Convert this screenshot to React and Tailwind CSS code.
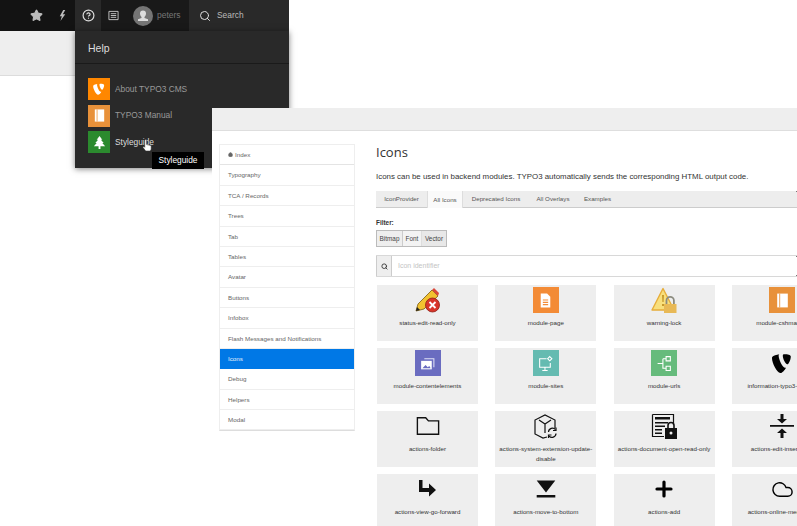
import React from "react";
import { Star, CircleHelp, Search, Plus, Cloud, House } from "lucide-react";

const typo3Path =
  "M11 12.5c-.3.1-.5.1-.8.1-1.9 0-4.7-6.6-4.7-8.8 0-.8.2-1.1.5-1.3C3.7 2.8 1.5 3.5.8 4.4c-.2.2-.3.6-.3 1.1 0 3.4 3.7 11 6.3 11 1.2 0 3.2-2 4.2-4zM9.8 2.4c2.4 0 4.8.4 4.8 1.7 0 2.7-1.7 5.9-2.6 5.9-1.5 0-3.4-4.3-3.4-6.4 0-1 .4-1.2 1.2-1.2z";

const menuItems = [
  "Typography",
  "TCA / Records",
  "Trees",
  "Tab",
  "Tables",
  "Avatar",
  "Buttons",
  "Infobox",
  "Flash Messages and Notifications",
  "Icons",
  "Debug",
  "Helpers",
  "Modal",
];

function Typo3Logo({ className, fill = "#fff" }) {
  return (
    <svg viewBox="0 0 16 18" className={className}>
      <path d={typo3Path} fill={fill} />
    </svg>
  );
}

function BookGlyph({ className }) {
  return (
    <svg viewBox="0 0 16 16" className={className}>
      <path d="M3 1.5h10v13H3z" fill="#fff" />
      <path d="M5 1.5h.8v13H5z" fill="#e8913a" />
    </svg>
  );
}

function EdgeDot({ className }) {
  return <span className={`absolute right-0 w-[1px] h-[1px] bg-[#777] ${className}`} />;
}

function ModuleBox({ color, children }) {
  return (
    <div className="w-[26px] h-[26px] flex items-center justify-center" style={{ backgroundColor: color }}>
      {children}
    </div>
  );
}

function PageModule() {
  return (
    <ModuleBox color="#f38b36">
      <svg viewBox="0 0 16 16" className="w-[17px] h-[17px]">
        <path d="M3.5 1.5h6l3 3v10h-9z" fill="#fff" />
        <path d="M5.5 7h5v1.1h-5zM5.5 9.2h5v1.1h-5zM5.5 11.4h5v1.1h-5z" fill="#f38b36" />
      </svg>
    </ModuleBox>
  );
}

function ContentModule() {
  return (
    <ModuleBox color="#6a6cc0">
      <svg viewBox="0 0 16 16" className="w-[17px] h-[17px]">
        <path d="M5 3.5h9v8" fill="none" stroke="#dfe0f5" strokeWidth="1" />
        <path d="M2 5.5h10v8H2z" fill="#fff" />
        <path d="M3.2 12.5l3-3 2 2 1.5-1.2 1.3 2.2z" fill="#6a6cc0" />
      </svg>
    </ModuleBox>
  );
}

function SitesModule() {
  return (
    <ModuleBox color="#65bbb1">
      <svg viewBox="0 0 16 16" className="w-[17px] h-[17px]" fill="none" stroke="#fff">
        <path d="M9 3.5H2.5v8h10V7.5M7.5 11.5v2.5M5 14.5h5" />
        <path d="M12 1.500l2 2-2 2-2-2z" />
      </svg>
    </ModuleBox>
  );
}

function UrlsModule() {
  return (
    <ModuleBox color="#66bb7c">
      <svg viewBox="0 0 16 16" className="w-[17px] h-[17px]" fill="none" stroke="#fff">
        <path d="M1.5 8h5M6.500 3.500v9h3M6.500 3.500h3" />
        <path d="M9.500 1.500h4v4h-4zM9.500 10.500h4v4h-4z" />
      </svg>
    </ModuleBox>
  );
}

function BookModule() {
  return (
    <ModuleBox color="#e8913a">
      <BookGlyph className="w-[17px] h-[17px]" />
    </ModuleBox>
  );
}

function EditReadOnly() {
  return (
    <svg viewBox="0 0 26 26" className="w-[26px] h-[26px]">
      <path d="M1 24l2-7L17 3l6 6L9 22z" fill="#f2c230" stroke="#7a5a10" strokeWidth="0.8" />
      <path d="M1 24l1-4 3 3z" fill="#222" />
      <path d="M17 3l2-2 5 5-1 3z" fill="#d9483b" />
      <circle cx="17.500" cy="18" r="7" fill="#d8352a" stroke="#8f1d14" strokeWidth="0.8" />
      <path d="M14.500 15l6 6M20.500 15l-6 6" stroke="#fff" strokeWidth="1.800" />
    </svg>
  );
}

function WarningLock() {
  return (
    <svg viewBox="0 0 26 26" className="w-[26px] h-[26px]">
      <path d="M12 1.500L1 23h22z" fill="#f8df7c" stroke="#e6ad3a" strokeWidth="1.400" strokeLinejoin="round" />
      <path d="M11 8h2l-.4 7h-1.200zM11 17h2v2h-2z" fill="#c79a2c" />
      <path d="M15.500 17v-3.500a3.700 3.700 0 0 1 7.400 0V17" fill="none" stroke="#8c8c80" strokeWidth="1.800" />
      <path d="M13 17h12.500v9H13z" fill="#e8b956" />
    </svg>
  );
}

function FolderOutline() {
  return (
    <svg viewBox="0 0 26 26" className="w-[24px] h-[24px]" fill="none" stroke="#111" strokeWidth="1.500">
      <path d="M1.500 4h9l3 3.500h11V22h-23z" />
    </svg>
  );
}

function SystemUpdate() {
  return (
    <svg viewBox="0 0 26 26" className="w-[26px] h-[26px]" fill="none" stroke="#111" strokeWidth="1.200">
      <path d="M14 24l-4 1-8-4V7l10-5 10 5v8" />
      <path d="M6 7l6 4 6-4M12 11v9" />
      <path d="M15.500 19a4 4 0 0 1 7-2.500M23 20.500a4 4 0 0 1-7 2.500" />
      <path d="M23 14.500v3h-3M15.500 25v-3h3" />
    </svg>
  );
}

function DocumentLock() {
  return (
    <svg viewBox="0 0 26 26" className="w-[26px] h-[26px]">
      <path d="M1.500 1.500h21v10M13 23.500H1.500v-22" fill="none" stroke="#111" strokeWidth="1.200" />
      <path d="M4 4h15v2.500H4zM4 9h13v1.500H4zM4 12.500h10v1.500H4zM4 16h7v1.500H4zM4 19.500h7V21H4z" fill="#111" />
      <path d="M17 15v-2.500a3 3 0 0 1 6 0V15" fill="none" stroke="#111" strokeWidth="1.600" />
      <path d="M14 15h12v11H14z" fill="#111" />
      <circle cx="20" cy="20" r="1.500" fill="#eee" />
    </svg>
  );
}

function EditInsert() {
  return (
    <svg viewBox="0 0 26 26" className="w-[26px] h-[26px]" fill="#111">
      <path d="M1 12h24v1.800H1zM11.500 1h3v5H18l-5 4.500L8 6h3.500zM11.500 25h3v-5H18l-5-4.500L8 20h3.500z" />
    </svg>
  );
}

function GoForward() {
  return (
    <svg viewBox="0 0 26 26" className="w-[26px] h-[26px]" fill="#111">
      <path d="M4 4h3.500v8H14V7.500l7 6.500-7 6.500V16H4z" />
    </svg>
  );
}

function MoveBottom() {
  return (
    <svg viewBox="0 0 26 26" className="w-[22px] h-[22px]" fill="#111">
      <path d="M2 3h22L13 17zM2 20h22v3H2z" />
    </svg>
  );
}

const cards = [
  { label: "status-edit-read-only", icon: <EditReadOnly /> },
  { label: "module-page", icon: <PageModule /> },
  { label: "warning-lock", icon: <WarningLock /> },
  { label: "module-cshmanual", icon: <BookModule /> },
  { label: "module-contentelements", icon: <ContentModule /> },
  { label: "module-sites", icon: <SitesModule /> },
  { label: "module-urls", icon: <UrlsModule /> },
  { label: "information-typo3-version", icon: <Typo3Logo className="w-[24px] h-[24px]" fill="#000" /> },
  { label: "actions-folder", icon: <FolderOutline /> },
  { label: "actions-system-extension-update-disable", icon: <SystemUpdate /> },
  { label: "actions-document-open-read-only", icon: <DocumentLock /> },
  { label: "actions-edit-insert-after", icon: <EditInsert /> },
  { label: "actions-view-go-forward", icon: <GoForward /> },
  { label: "actions-move-to-bottom", icon: <MoveBottom /> },
  { label: "actions-add", icon: <Plus className="w-[24px] h-[24px] text-black" strokeWidth={3.200} /> },
  { label: "actions-online-media-add", icon: <Cloud className="w-[23px] h-[23px] text-black" strokeWidth={1.500} /> },
];

function HelpDropdown() {
  return (
    <div className="absolute left-[75px] top-[31px] w-[214px] h-[137px] bg-[#292929] text-[#999] shadow-[0_1px_6px_rgba(0,0,0,0.5)]">
      <div className="h-[33px] pl-[13px] pt-[3px] flex items-center text-[10.500px] text-[#ddd] border-b border-[#1a1a1a]">Help</div>
      <div className="pl-[13px] pt-[14px] flex flex-col gap-[4.500px] text-[8.350px]">
        <div className="flex items-center gap-[5px] h-[22px]">
          <div className="w-[22px] h-[22px] bg-[#ff8700] flex items-center justify-center">
            <Typo3Logo className="w-[14px] h-[14px]" />
          </div>
          About TYPO3 CMS
        </div>
        <div className="flex items-center gap-[5px] h-[22px]">
          <div className="w-[22px] h-[22px] bg-[#e8913a] flex items-center justify-center">
            <BookGlyph className="w-[15px] h-[15px]" />
          </div>
          TYPO3 Manual
        </div>
        <div className="flex items-center gap-[5px] h-[22px] text-[#ddd]">
          <div className="w-[22px] h-[22px] bg-[#2b8a2e] flex items-center justify-center">
            <svg viewBox="0 0 16 16" className="w-[15px] h-[15px]" fill="#fff">
              <path d="M8 1l3 4h-1.500l3 3.500h-1.500l3 3.500H9v3H7v-3H2l3-3.500H3.500l3-3.500H5z" />
            </svg>
          </div>
          Styleguide
        </div>
      </div>
    </div>
  );
}

export default function App() {
  return (
    <div className="relative w-[797px] h-[526px] overflow-hidden bg-white font-['Liberation_Sans',Arial,sans-serif]">
      {/* first screenshot: backend toolbar */}
      <div className="w-[289px]">
        <div className="h-[31px] flex bg-[#131313] text-[#ccc]">
          <div className="w-[75px] flex items-center pl-[30px] gap-[13px]">
            <Star className="w-[13px] h-[13px] text-[#bbb]" fill="#bbb" />
            <svg viewBox="0 0 10 16" className="w-[7px] h-[11px] ml-[3px]" fill="#bbb">
              <path d="M6 0L1 9h3l-2 7 7-10H5.500L9 0z" />
            </svg>
          </div>
          <div className="w-[26px] flex items-center justify-center bg-[#292929]">
            <CircleHelp className="w-[13px] h-[13px] text-[#ddd]" strokeWidth={2.200} />
          </div>
          <div className="w-[88px] flex items-center bg-[#191919] pl-[7px]">
            <svg viewBox="0 0 12 12" className="w-[11px] h-[11px] text-[#ccc]" fill="none" stroke="currentColor">
              <path d="M1 1.500h10v9H1zM3 4h6M3 6h6M3 8h6" />
            </svg>
            <div className="ml-[14px] w-[20px] h-[20px] rounded-full bg-[#757575] flex items-center justify-center overflow-hidden">
              <svg viewBox="0 0 20 20" className="w-[20px] h-[20px]" fill="#ddd">
                <path d="M10 4.500a3 3 0 0 1 3 3c0 1.500-.7 2.800-1.500 3.400v1.200l3.500 1.200V15H5v-1.700l3.500-1.200v-1.200C7.700 10.300 7 9 7 7.500a3 3 0 0 1 3-3z" />
              </svg>
            </div>
            <span className="ml-[4px] text-[8.500px] text-[#777]">peters</span>
          </div>
          <div className="flex-1 flex items-center bg-[#292929] pl-[10px] text-[8.400px] text-[#bbb]">
            <Search className="w-[12px] h-[12px] mr-[6px] text-[#ddd]" strokeWidth={2} />
            Search
          </div>
        </div>
        <div className="h-[45px] bg-[#eeeeee] border-b border-[#dcdcdc]" />
      </div>

      <HelpDropdown />

      {/* second screenshot: styleguide module */}
      <div className="absolute left-[212px] top-[108px] w-[585px] h-[418px] bg-white overflow-hidden">
        <div className="h-[23px] bg-[#eeeeee] border-b border-[#dedede]" />
        <div className="flex pt-[13px]">
          <div className="ml-[7px] w-[136px] h-[287px] border border-[#eeeeee] border-b-[#dddddd] text-[6.260px] text-[#666] shrink-0">
            <div className="h-[20.400px] pl-[8px] flex items-center border-b border-[#e4e4e4]">
              <House className="w-[5px] h-[5px] mr-[2px] text-[#666]" fill="#666" />
              Index
            </div>
            {menuItems.map((item) =>
              item === "Icons" ? (
                <div key={item} className="h-[20.400px] pl-[8px] flex items-center bg-[#0078e6] text-[#e8f2fd]">
                  {item}
                </div>
              ) : (
                <div key={item} className="h-[20.400px] pl-[8px] flex items-center border-b border-[#eeeeee]">
                  {item}
                </div>
              )
            )}
          </div>

          <div className="ml-[21px] flex-1 min-w-0">
            <h1 className="text-[13px] leading-[17px] text-[#333] font-['Open_Sans',sans-serif]">Icons</h1>
            <p className="mt-[10px] text-[7.900px] leading-[12px] text-[#333] whitespace-nowrap">
              Icons can be used in backend modules. TYPO3 automatically sends the corresponding HTML output code.
            </p>
            <div className="relative mt-[8px] h-[17px] flex bg-[#ededed] border-b border-[#cccccc] text-[6.200px] text-[#555]">
              <div className="w-[51px] flex items-center justify-center">IconProvider</div>
              <div className="w-[36px] h-[17px] flex items-center justify-center bg-[#fafafa] border-x border-[#dddddd]">All Icons</div>
              <div className="w-[66px] flex items-center justify-center">Deprecated Icons</div>
              <div className="w-[48px] flex items-center justify-center">All Overlays</div>
              <div className="w-[41px] flex items-center justify-center">Examples</div>
              <EdgeDot className="top-0" />
            </div>
            <div className="mt-[10px] text-[6.400px] leading-[9px] font-bold text-[#333]">Filter:</div>
            <div className="mt-[3px] flex w-max h-[17px] border border-[#bbbbbb] bg-[#eeeeee] text-[6.400px] text-[#444]">
              <div className="w-[26px] flex items-center justify-center border-r border-[#cccccc]">Bitmap</div>
              <div className="w-[19px] flex items-center justify-center bg-[#f3f3f3] border-r border-[#dddddd]">Font</div>
              <div className="w-[24px] flex items-center justify-center bg-[#e8e8e8]">Vector</div>
            </div>
            <div className="relative mt-[8px] h-[22px] flex border-y border-[#d8d8d8] bg-white">
              <div className="w-[16px] flex items-center justify-center bg-[#eeeeee] border-x border-[#cccccc]">
                <Search className="w-[7px] h-[7px] text-[#333]" strokeWidth={3} />
              </div>
              <div className="pl-[6px] flex items-center text-[7px] text-[#c4c4c4]">Icon identifier</div>
              <EdgeDot className="top-0" />
              <EdgeDot className="bottom-0" />
            </div>
            <div className="relative mt-[8px] ml-[1px] grid grid-cols-[101px_101px_101px_101px] gap-x-[17.300px] gap-y-[7px]">
              {cards.map((card) => (
                <div key={card.label} className="relative h-[56px] bg-[#eeeeee] flex flex-col items-center pt-[2px]">
                  <div className="h-[26px] flex items-center justify-center">{card.icon}</div>
                  <div className="mt-[5px] px-[1px] text-center text-[6.200px] leading-[10px] text-[#333] break-words">
                    {card.label}
                  </div>
                </div>
              ))}
            </div>
          </div>
        </div>
      </div>

      {/* tooltip and pointer over the dropdown */}
      <div className="absolute left-[152px] top-[152px] w-[52px] h-[17px] bg-black text-white text-[8.350px] flex items-center justify-center">
        Styleguide
      </div>
      <svg viewBox="0 0 12 14" className="absolute left-[142px] top-[139px] w-[11px] h-[13px]">
        <path
          d="M3 1.500a1 1 0 0 1 2 0V6l5 1v4l-1 2H4L1 9l1-1 1 1z"
          fill="#fff"
          stroke="#333"
          strokeWidth="0.6"
        />
      </svg>
    </div>
  );
}
